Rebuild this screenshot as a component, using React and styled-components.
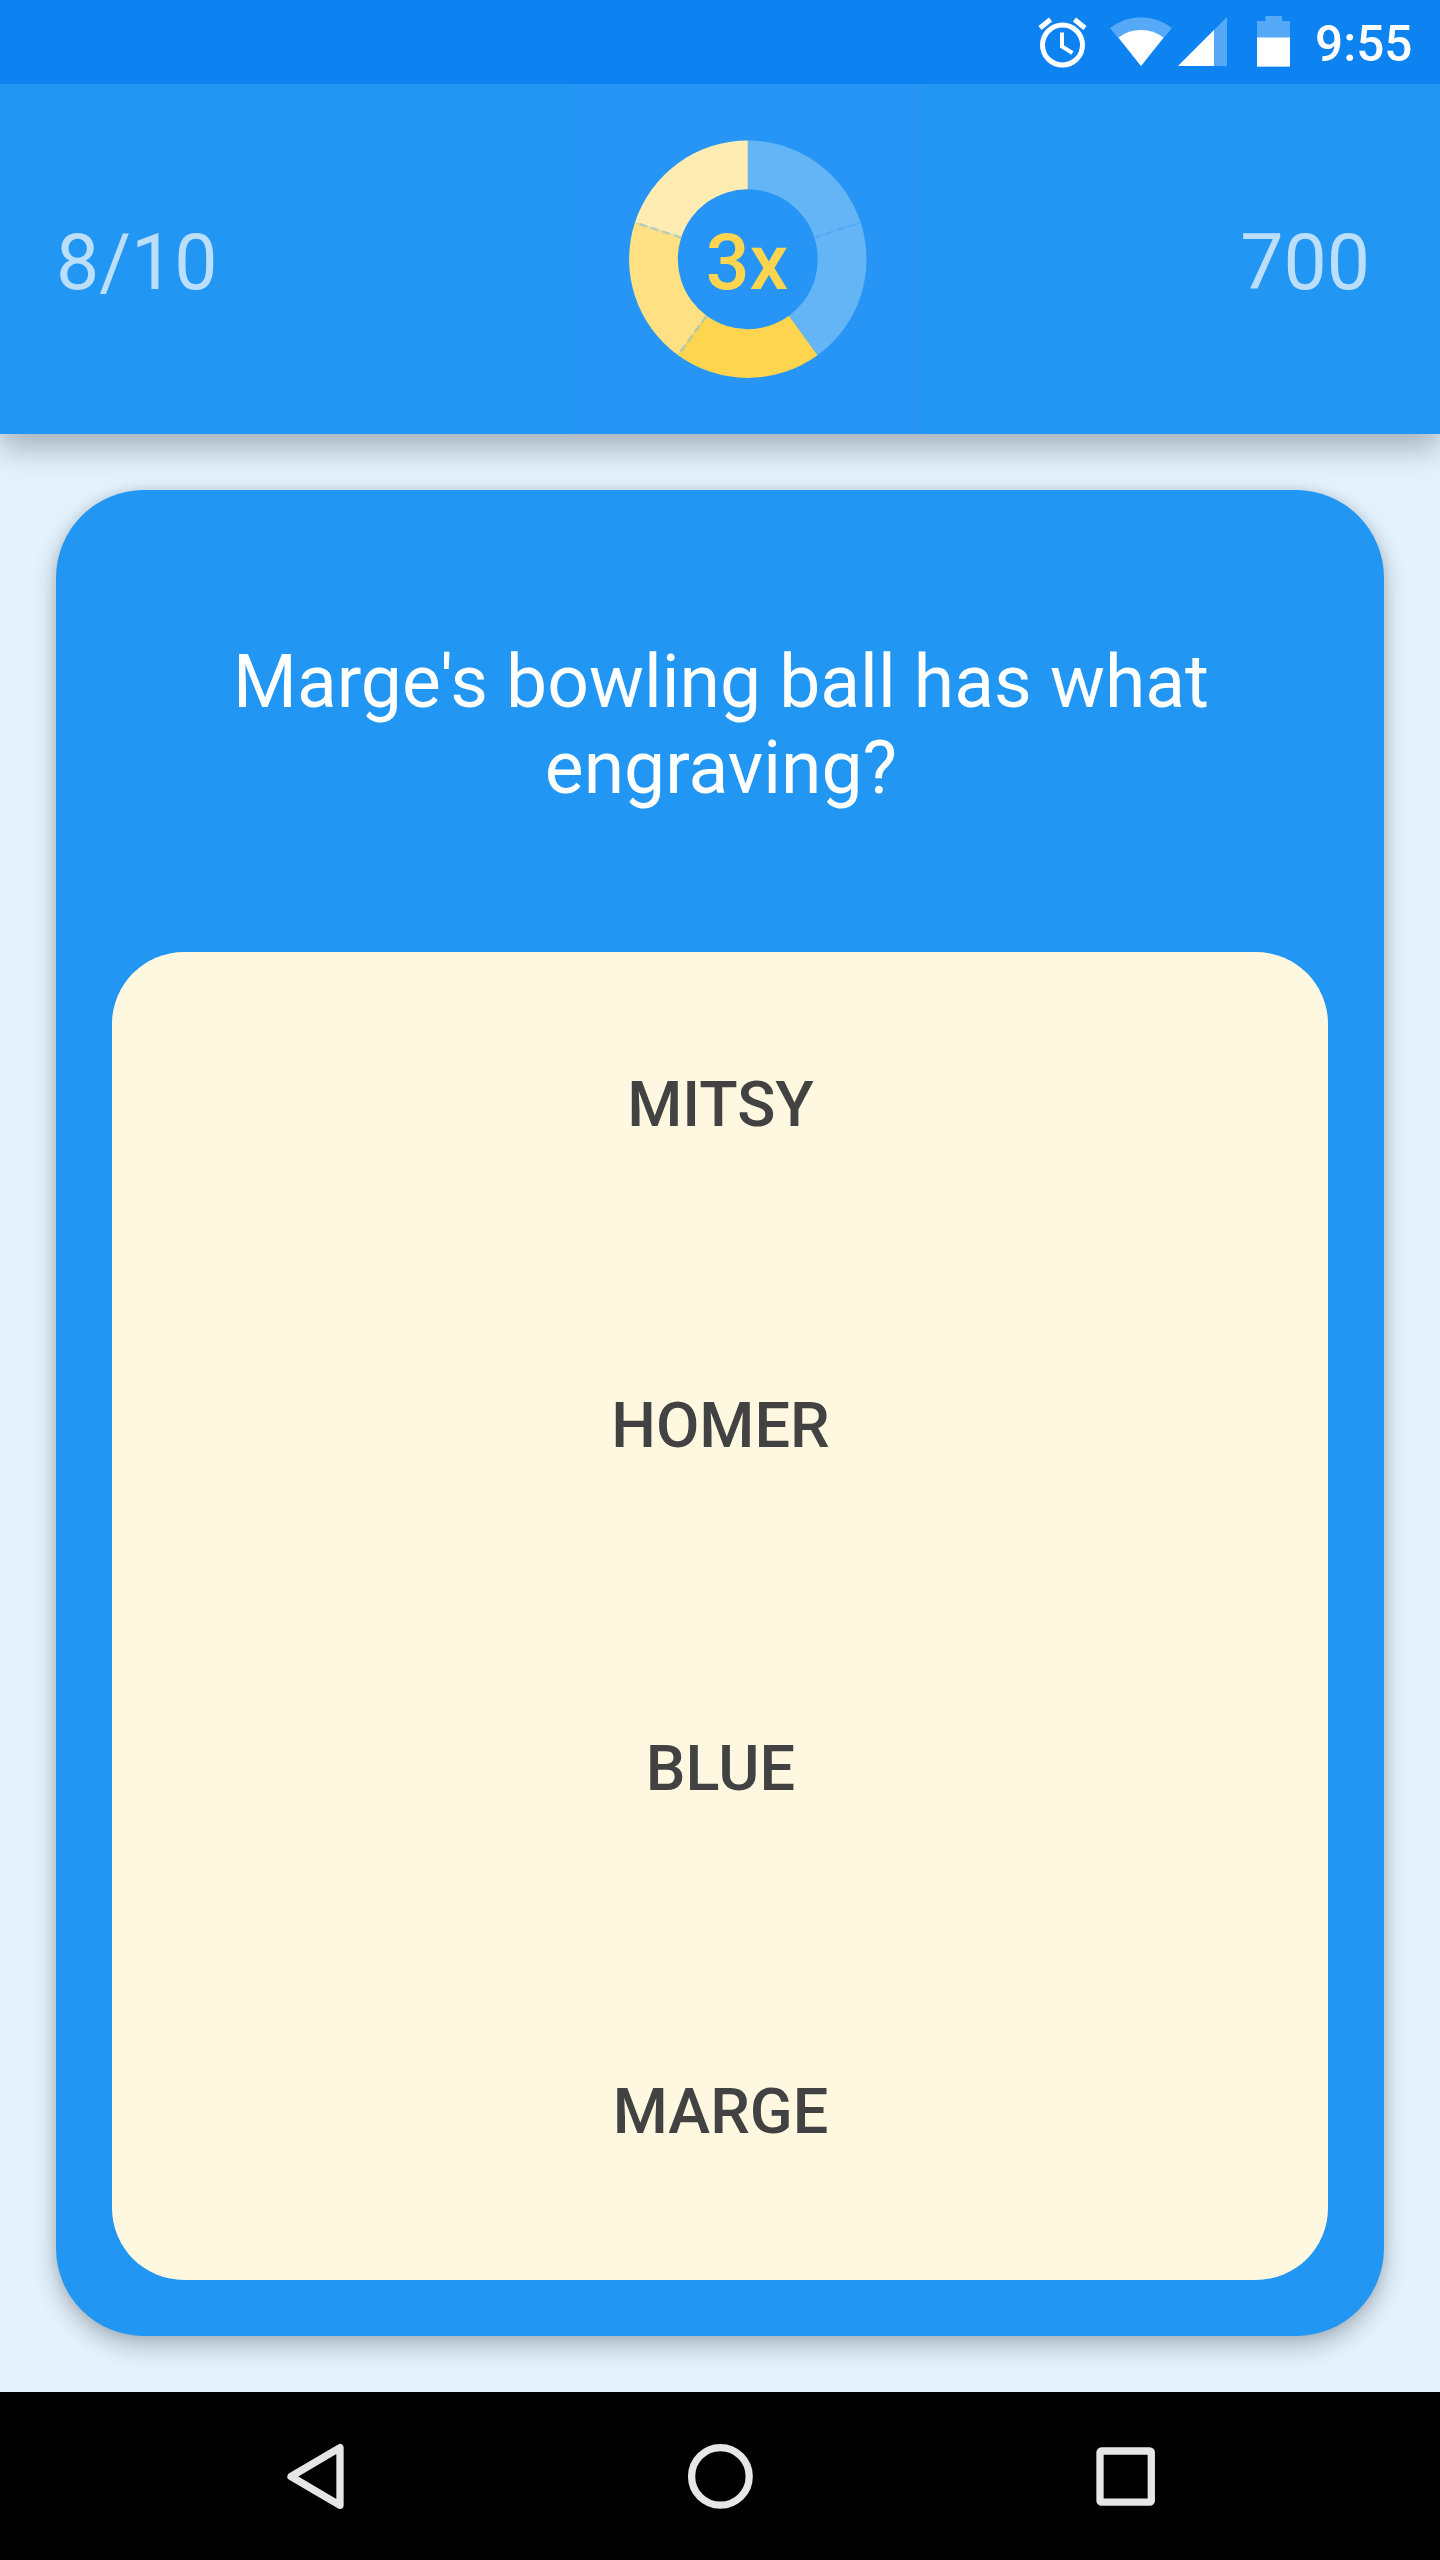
import React from "react";
import styled, { createGlobalStyle } from "styled-components";

const GlobalStyle = createGlobalStyle`
  * { box-sizing: border-box; }
  html, body { margin: 0; padding: 0; }
  body { background: #e3f2fd; font-family: Roboto, "Liberation Sans", sans-serif; }
`;

const Screen = styled.div`
  width: 1440px;
  height: 2560px;
  display: flex;
  flex-direction: column;
  background: #e3f2fd;
  overflow: hidden;
`;

const StatusBar = styled.div`
  height: 84px;
  flex: none;
  z-index: 1;
  background: #0d83f1;
  display: flex;
  justify-content: flex-end;
  align-items: center;
  padding-right: 28px;
`;

const StatusIcons = styled.svg`
  width: 256px;
  height: 84px;
  display: block;
  margin-right: 23px;
`;

const Clock = styled.span`
  width: 97px;
  color: #fff;
  font-size: 49.5px;
  font-weight: 500;
  line-height: 57px;
  padding-top: 4px;
  white-space: nowrap;
`;

const Header = styled.header`
  height: 350px;
  flex: none;
  display: grid;
  grid-template-columns: 573px 350px 1fr;
  background: #2196f3;
  box-shadow: 0 14px 29px rgba(0, 0, 0, 0.27);
`;

const Stat = styled.div`
  display: flex;
  align-items: center;
  justify-content: ${(p) => (p.$end ? "flex-end" : "flex-start")};
  padding: 8px ${(p) => (p.$end ? "70px" : "0")} 0 ${(p) => (p.$end ? "0" : "56px")};
  color: #bbdefb;
  font-size: 77px;
  line-height: 90px;
`;

const Multiplier = styled.div`
  display: grid;
  place-items: center;
  background: #2795f5;
  > * { grid-area: 1 / 1; }
`;

const Ring = styled.svg`
  width: 350px;
  height: 350px;
  display: block;
`;

const MultiplierText = styled.span`
  color: #ffd54f;
  font-size: 77px;
  font-weight: 500;
  line-height: 90px;
  padding: 8px 2px 0 0;
`;

const Main = styled.main`
  flex: 1;
  display: flex;
  padding: 56px;
`;

const Card = styled.section`
  flex: 1;
  display: flex;
  flex-direction: column;
  padding: 0 56px 56px;
  border-radius: 88px;
  background: #2196f3;
  box-shadow: 0 10px 24px rgba(0, 0, 0, 0.25), 0 0 12px rgba(0, 0, 0, 0.09);
`;

const Question = styled.h1`
  height: 462px;
  margin: 0;
  padding: 8px 84px 0 86px;
  display: flex;
  align-items: center;
  justify-content: center;
  text-align: center;
  color: #fff;
  font-size: 73.2px;
  font-weight: 400;
  line-height: 86px;
`;

const Answers = styled.div`
  flex: 1;
  display: grid;
  grid-template-rows: 301px 341px 345px 341px;
  border-radius: 72px;
  background: #fff8e1;
  overflow: hidden;
`;

const Answer = styled.button`
  border: 0;
  padding: 4px 0 0 1px;
  background: transparent;
  color: #424242;
  font: 500 63px/73px Roboto, "Liberation Sans", sans-serif;
  text-transform: uppercase;
`;

const NavBar = styled.nav`
  height: 168px;
  flex: none;
  display: grid;
  grid-template-columns: repeat(3, 84px);
  justify-content: center;
  align-items: center;
  column-gap: 321px;
  background: #000;
`;

const NavIcon = styled.svg`
  width: 84px;
  height: 84px;
  display: block;
  fill: none;
  stroke: #e6e6e6;
  stroke-width: 7.3;
  stroke-linejoin: round;
`;

const point = (r, deg) => {
  const a = (deg * Math.PI) / 180;
  return `${(174.8 + r * Math.sin(a)).toFixed(2)} ${(175.2 - r * Math.cos(a)).toFixed(2)}`;
};

const segment = (from, to) =>
  `M${point(118.7, from)}A118.7 118.7 0 0 1 ${point(118.7, to)}L${point(70, to)}A70 70 0 0 0 ${point(70, from)}Z`;

const SEGMENT_COLORS = ["#64b5f6", "#64b5f6", "#ffd54f", "#ffe082", "#ffecb3"];
const DIVIDERS = [
  [72, "#54abf4"],
  [216, "#b3c9a8"],
  [288, "#b3cdc0"],
];
const ANSWERS = ["Mitsy", "Homer", "Blue", "Marge"];

export default function App() {
  return (
    <>
      <GlobalStyle />
      <Screen>
        <StatusBar>
          <StatusIcons viewBox="1036 0 256 84">
            <circle cx="1062.5" cy="45" r="20" fill="none" stroke="#fff" strokeWidth="5" />
            <path d="M1062 32.5V46.5L1072.5 53" fill="none" stroke="#fff" strokeWidth="4" />
            <path d="M1040 28L1050.500 19.500M1085 28L1074.500 19.500" fill="none" stroke="#fff" strokeWidth="5" />
            <path d="M1110 28A50 50 0 0 1 1172 28L1141 66Z" fill="#56a9f6" />
            <path d="M1118.500 37.500A38 38 0 0 1 1163.500 37.500L1141 66Z" fill="#fff" />
            <path d="M1227 17V66H1178Z" fill="#56a9f6" />
            <path d="M1214 30V66H1178Z" fill="#fff" />
            <path d="M1257 21H1265.500V16H1282V21H1290V67H1257Z" fill="#56a9f6" />
            <path d="M1257 37.500H1290V66.500H1257Z" fill="#fff" />
          </StatusIcons>
          <Clock>9:55</Clock>
        </StatusBar>
        <Header>
          <Stat>8/10</Stat>
          <Multiplier>
            <Ring viewBox="0 0 350 350">
              {SEGMENT_COLORS.map((color, i) => (
                <path key={i} d={segment(i * 72, i * 72 + 72)} fill={color} />
              ))}
              {DIVIDERS.map(([deg, color]) => (
                <path
                  key={deg}
                  d={`M${point(70, deg)}L${point(118.7, deg)}`}
                  stroke={color}
                  strokeWidth="2.5"
                  strokeDasharray="8 4"
                />
              ))}
            </Ring>
            <MultiplierText>3x</MultiplierText>
          </Multiplier>
          <Stat $end>700</Stat>
        </Header>
        <Main>
          <Card>
            <Question>Marge's bowling ball has what engraving?</Question>
            <Answers>
              {ANSWERS.map((label) => (
                <Answer key={label}>{label}</Answer>
              ))}
            </Answers>
          </Card>
        </Main>
        <NavBar>
          <NavIcon viewBox="0 0 84 84">
            <path d="M18 42.5L67 13.700V71.300Z" />
          </NavIcon>
          <NavIcon viewBox="0 0 84 84">
            <circle cx="42.4" cy="42.4" r="28.8" />
          </NavIcon>
          <NavIcon viewBox="0 0 84 84">
            <rect x="17" y="17" width="51.3" height="51.2" rx="1.5" />
          </NavIcon>
        </NavBar>
      </Screen>
    </>
  );
}
